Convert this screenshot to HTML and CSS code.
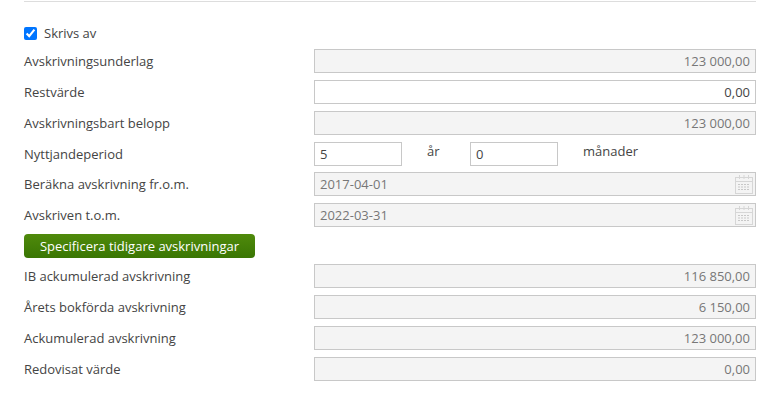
FILE: index.html
```html
<!DOCTYPE html>
<html lang="sv">
<head>
  <meta charset="UTF-8" />
  <title>Avskrivning</title>
  <link rel="stylesheet" href="styles.css">
</head>
<body>
  <svg class="icon-defs" width="0" height="0">
    <symbol id="cal" viewBox="0 0 18 20">
      <g fill="none" stroke="#d6d6d6">
        <rect x="0.5" y="3.5" width="17" height="16" fill="#f4f4f4" />
        <path d="M0.5 7.5h17M4.5 1v4M9 1v4M13.5 1v4" />
        <path d="M3 10.5h12M3 13h12M3 15.5h12" stroke-dasharray="2 1" stroke="#c8c8c8" />
      </g>
    </symbol>
  </svg>

  <div class="form">
    <div class="check-row">
      <input type="checkbox" id="skrivsAv" checked />
      <label for="skrivsAv">Skrivs av</label>
    </div>

    <div class="row">
      <label>Avskrivningsunderlag</label>
      <input class="num" type="text" value="123 000,00" disabled />
    </div>
    <div class="row">
      <label>Restvärde</label>
      <input class="num" type="text" value="0,00" />
    </div>
    <div class="row">
      <label>Avskrivningsbart belopp</label>
      <input class="num" type="text" value="123 000,00" disabled />
    </div>
    <div class="row row-period">
      <label>Nyttjandeperiod</label>
      <div class="period">
        <input type="text" value="5" />
        <span>år</span>
        <input type="text" value="0" />
        <span>månader</span>
      </div>
    </div>
    <div class="row">
      <label>Beräkna avskrivning fr.o.m.</label>
      <div class="date">
        <input type="text" value="2017-04-01" disabled />
        <svg><use href="#cal" /></svg>
      </div>
    </div>
    <div class="row">
      <label>Avskriven t.o.m.</label>
      <div class="date">
        <input type="text" value="2022-03-31" disabled />
        <svg><use href="#cal" /></svg>
      </div>
    </div>

    <button class="btn-green">Specificera tidigare avskrivningar</button>

    <div class="row">
      <label>IB ackumulerad avskrivning</label>
      <input class="num" type="text" value="116 850,00" disabled />
    </div>
    <div class="row">
      <label>Årets bokförda avskrivning</label>
      <input class="num" type="text" value="6 150,00" disabled />
    </div>
    <div class="row">
      <label>Ackumulerad avskrivning</label>
      <input class="num" type="text" value="123 000,00" disabled />
    </div>
    <div class="row">
      <label>Redovisat värde</label>
      <input class="num" type="text" value="0,00" disabled />
    </div>
  </div>
</body>
</html>
```

FILE: styles.css
```css
body { margin: 0; background: #fff; font-family: "Open Sans", sans-serif; font-size: 13px; color: #444; }
.icon-defs { display: block; height: 0; }
.form { margin: 1px 19px 0 24px; border-top: 1px solid #ddd; padding-top: 21px; }
.check-row { display: flex; align-items: center; gap: 7px; height: 20px; margin-bottom: 5px; }
.check-row input { width: 13px; height: 13px; margin: 0; accent-color: #0075ff; }
.row { display: grid; grid-template-columns: 290px 442px; align-items: center; height: 25px; margin-bottom: 6px; }
.row-period { margin-bottom: 5px; }
input[type="text"] { box-sizing: border-box; width: 100%; height: 24px; padding: 0 5px; border: 1px solid #c8c8c8; background: #fff; font: 13px "Open Sans", sans-serif; color: #444; }
input[type="text"]:disabled { background: #f4f4f4; color: #777; opacity: 1; -webkit-text-fill-color: #777; }
.num { text-align: right; }
.period { display: flex; align-items: flex-start; }
.period input[type="text"] { width: 88px; }
.period span { width: 68px; padding: 0 0 0 25px; box-sizing: border-box; line-height: 18px; }
.period span:last-child { width: auto; }
.date { position: relative; }
.date svg { position: absolute; right: 3px; top: 2px; width: 18px; height: 20px; }
.btn-green { display: block; box-sizing: border-box; width: 231px; height: 24px; margin: 7px 0 5px; padding: 0; border: 0; border-radius: 4px; background: linear-gradient(#4f8a0b, #3a7604); color: #fff; font: 13px "Open Sans", sans-serif; }
```
